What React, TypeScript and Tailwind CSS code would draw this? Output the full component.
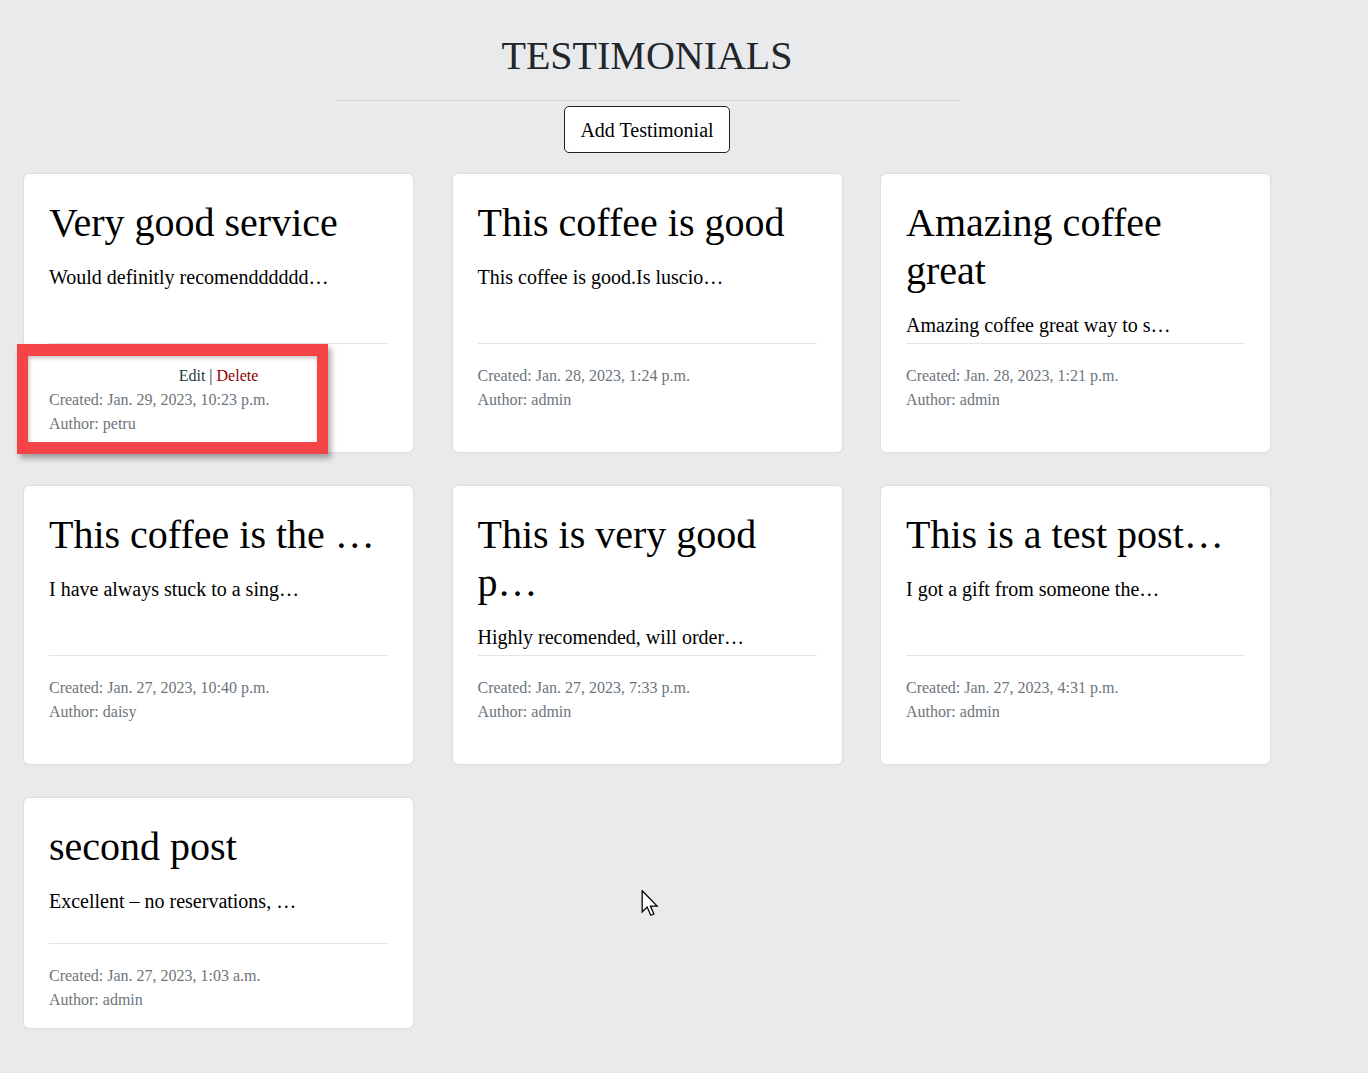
import React from "react";

type Testimonial = {
	title: string;
	body: string;
	created: string;
	author: string;
	own?: boolean;
};

const testimonials: Testimonial[] = [
	{ title: "Very good service", body: "Would definitly recomendddddd…", created: "Jan. 29, 2023, 10:23 p.m.", author: "petru", own: true },
	{ title: "This coffee is good", body: "This coffee is good.Is luscio…", created: "Jan. 28, 2023, 1:24 p.m.", author: "admin" },
	{ title: "Amazing coffee great", body: "Amazing coffee great way to s…", created: "Jan. 28, 2023, 1:21 p.m.", author: "admin" },
	{ title: "This coffee is the …", body: "I have always stuck to a sing…", created: "Jan. 27, 2023, 10:40 p.m.", author: "daisy" },
	{ title: "This is very good p…", body: "Highly recomended, will order…", created: "Jan. 27, 2023, 7:33 p.m.", author: "admin" },
	{ title: "This is a test post…", body: "I got a gift from someone the…", created: "Jan. 27, 2023, 4:31 p.m.", author: "admin" },
	{ title: "second post", body: "Excellent – no reservations, …", created: "Jan. 27, 2023, 1:03 a.m.", author: "admin" },
];

const TestimonialCard: React.FC<{ item: Testimonial; short?: boolean }> = ({ item, short }) => (
	<div className="flex flex-col bg-white rounded-[5px] shadow-[0_0_2px_rgba(0,0,0,0.18)] px-[25px] pt-[25px]">
		<div className={short ? "h-[120px]" : "h-[144px]"}>
			<h2 className="text-[40px] leading-[48px] text-black mb-[15px]">{item.title}</h2>
			<p className="text-[20px] leading-[30px] text-black">{item.body}</p>
		</div>
		<div className="h-px bg-[#e4e4e4]" />
		<div className="pt-[20px] text-[16px] leading-6 text-[#6c757d]">
			{item.own && (
				<div className="text-center">
					<span className="text-[#1f3a44]">Edit</span>
					<span className="text-[#1f2d33]"> | </span>
					<span className="text-[#8b0000]">Delete</span>
				</div>
			)}
			<div>Created: {item.created}</div>
			<div>Author: {item.author}</div>
		</div>
	</div>
);

const Cursor: React.FC = () => (
	<svg className="absolute left-[641px] top-[890px]" width="18" height="27" viewBox="0 0 12 19">
		<path d="M0.5 0.5 L0.5 15.5 L4 12 L6.5 17.8 L8.7 16.9 L6.3 11.3 L11 11.3 Z" fill="white" stroke="black" strokeWidth="0.9" strokeLinejoin="miter" />
	</svg>
);

export default function App() {
	return (
		<div className="relative min-h-screen bg-[#e9eaec] font-['Liberation_Serif',serif] pb-[45px]">
			<div className="w-[1246px] ml-[24px] flex flex-col items-center">
				<h1 className="pt-[32px] text-[40px] leading-[48px] text-[#222529]">TESTIMONIALS</h1>
				<div className="w-1/2 h-px bg-[#d2d3d5] mt-[20px]" />
				<button className="mt-[5px] h-[47px] px-[15px] bg-white border border-[#222] rounded-[5px] text-[20px] text-black">
					Add Testimonial
				</button>
			</div>

			<div className="ml-[24px] mt-[21px] grid grid-cols-[389px_389px_389px] grid-rows-[278px_278px_230px] gap-x-[39.5px] gap-y-[34px]">
				{testimonials.map((t, i) => (
					<TestimonialCard key={i} item={t} short={i === 6} />
				))}
			</div>

			{/* annotation box around edit/delete */}
			<div className="absolute left-[17px] top-[344px] w-[311px] h-[110px] border-x-[11px] border-y-[12px] border-[#f44447] shadow-[3px_4px_6px_rgba(0,0,0,0.35),inset_1px_2px_4px_rgba(0,0,0,0.25)]" />

			<Cursor />
		</div>
	);
}
